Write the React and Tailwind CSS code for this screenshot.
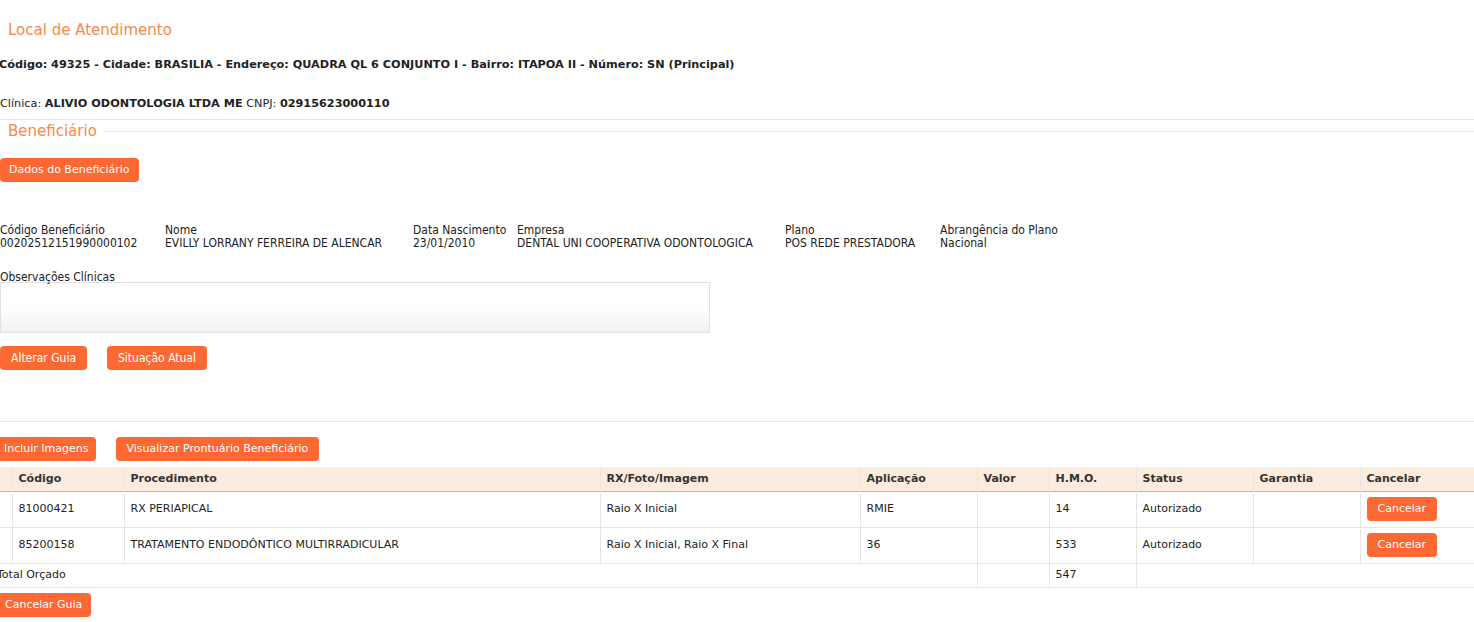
import React from 'react';

const verdana = { fontFamily: '"DejaVu Sans", Verdana, sans-serif' };
const tahoma = { fontFamily: '"DejaVu Sans Condensed", "DejaVu Sans", Tahoma, sans-serif' };

const Btn = ({ children, className = '', condensed = false }) => (
  <button
    style={condensed ? tahoma : verdana}
    className={`h-6 rounded-[4px] bg-[#fd6833] leading-6 text-white ${condensed ? 'px-[11px] text-[12px]' : 'px-[9px] text-[11px]'} ${className}`}
  >
    {children}
  </button>
);

const beneficiario = [
  { label: 'Código Beneficiário', value: '00202512151990000102', w: 'w-[165px]' },
  { label: 'Nome', value: 'EVILLY LORRANY FERREIRA DE ALENCAR', w: 'w-[248px]' },
  { label: 'Data Nascimento', value: '23/01/2010', w: 'w-[104px]' },
  { label: 'Empresa', value: 'DENTAL UNI COOPERATIVA ODONTOLOGICA', w: 'w-[268px]' },
  { label: 'Plano', value: 'POS REDE PRESTADORA', w: 'w-[155px]' },
  { label: 'Abrangência do Plano', value: 'Nacional', w: 'w-[160px]' },
];

const itens = [
  { codigo: '81000421', proc: 'RX PERIAPICAL', rx: 'Raio X Inicial', apl: 'RMIE', hmo: '14', status: 'Autorizado' },
  { codigo: '85200158', proc: 'TRATAMENTO ENDODÔNTICO MULTIRRADICULAR', rx: 'Raio X Inicial, Raio X Final', apl: '36', hmo: '533', status: 'Autorizado' },
];

const cols = [12, 112, 476, 260, 117, 72, 87, 117, 107, 114];

const App = () => {
  return (
    <div className="min-h-[622px] w-[1474px] overflow-hidden bg-white text-[#222]" style={verdana}>
      {/* Local de Atendimento */}
      <div className="pl-2 pt-[20px] text-[15px] leading-5 text-[#f7894a]">Local de Atendimento</div>
      <div className="-ml-px mt-[17px] text-[11.25px] font-bold leading-4 text-[#222]">
        Código: 49325 - Cidade: BRASILIA - Endereço: QUADRA QL 6 CONJUNTO I - Bairro: ITAPOA II - Número: SN (Principal)
      </div>
      <div className="mt-[23px] text-[11.25px] leading-4">
        Clínica: <b>ALIVIO ODONTOLOGIA LTDA ME</b> CNPJ: <b>02915623000110</b>
      </div>
      <div className="mt-[7px] h-px bg-[#e6e6e6]" />

      {/* Beneficiário */}
      <div className="mt-[1px] flex items-center">
        <span className="pl-2 text-[15px] leading-5 text-[#f7894a]">Beneficiário</span>
        <div className="ml-[8px] h-px flex-1 bg-[#e6e6e6]" />
      </div>

      <div className="mt-[15px]">
        <Btn>Dados do Beneficiário</Btn>
      </div>

      <div className="mt-[42px] flex text-[12px] leading-[13px] text-[#222]" style={tahoma}>
        {beneficiario.map((b) => (
          <div key={b.label} className={`${b.w} shrink-0`}>
            <div>{b.label}</div>
            <div>{b.value}</div>
          </div>
        ))}
      </div>

      <div className="mt-[21px] text-[12px] leading-[13px]" style={tahoma}>Observações Clínicas</div>
      <div className="-mt-[2px] h-[51px] w-[710px] border border-[#e2e2e2] bg-gradient-to-b from-white from-50% to-[#f1f1f1]" />

      <div className="mt-[13px] flex gap-5">
        <Btn condensed>Alterar Guia</Btn>
        <Btn condensed>Situação Atual</Btn>
      </div>

      <div className="mt-[51px] h-px bg-[#e6e6e6]" />

      <div className="mt-[15px] flex gap-5">
        <Btn className="-ml-[4px] pl-[8px] pr-[7px]">Incluir Imagens</Btn>
        <Btn className="px-[11px]">Visualizar Prontuário Beneficiário</Btn>
      </div>

      {/* Tabela */}
      <table className="mt-[6px] w-[1474px] table-fixed border-collapse text-[11px]">
        <colgroup>
          {cols.map((w, i) => (
            <col key={i} style={{ width: w }} />
          ))}
        </colgroup>
        <thead>
          <tr className="h-6 border-b border-[#f2a27a] bg-[#fbecdd] text-left font-bold text-[#333]">
            <th className="border-r border-[#e6e6e6]" />
            <th className="border-r border-[#e6e6e6] px-[6px]">Código</th>
            <th className="border-r border-[#e6e6e6] px-[6px]">Procedimento</th>
            <th className="border-r border-[#e6e6e6] px-[6px]">RX/Foto/Imagem</th>
            <th className="border-r border-[#e6e6e6] px-[6px]">Aplicação</th>
            <th className="border-r border-[#e6e6e6] px-[6px]">Valor</th>
            <th className="border-r border-[#e6e6e6] px-[6px]">H.M.O.</th>
            <th className="border-r border-[#e6e6e6] px-[6px]">Status</th>
            <th className="border-r border-[#e6e6e6] px-[6px]">Garantia</th>
            <th className="px-[6px]">Cancelar</th>
          </tr>
        </thead>
        <tbody className="text-[#222]">
          {itens.map((it) => (
            <tr key={it.codigo} className="h-9 border-b border-[#e6e6e6]">
              <td className="border-r border-[#e6e6e6]" />
              <td className="border-r border-[#e6e6e6] px-[6px]">{it.codigo}</td>
              <td className="border-r border-[#e6e6e6] px-[6px]">{it.proc}</td>
              <td className="border-r border-[#e6e6e6] px-[6px]">{it.rx}</td>
              <td className="border-r border-[#e6e6e6] px-[6px]">{it.apl}</td>
              <td className="border-r border-[#e6e6e6] px-[6px]" />
              <td className="border-r border-[#e6e6e6] px-[6px]">{it.hmo}</td>
              <td className="border-r border-[#e6e6e6] px-[6px]">{it.status}</td>
              <td className="border-r border-[#e6e6e6] px-[6px]" />
              <td className="px-[6px]">
                <Btn className="px-[11px]">Cancelar</Btn>
              </td>
            </tr>
          ))}
          <tr className="h-6 border-b border-[#e6e6e6]">
            <td colSpan={5} className="whitespace-nowrap">
              <span className="-ml-[3px] inline-block">Total Orçado</span>
            </td>
            <td className="border-x border-[#e6e6e6]" />
            <td className="border-r border-[#e6e6e6] px-[6px]">547</td>
            <td colSpan={3} />
          </tr>
        </tbody>
      </table>

      <div className="mt-[3px]">
        <Btn className="-ml-[4px]">Cancelar Guia</Btn>
      </div>
    </div>
  );
};

export default App;
